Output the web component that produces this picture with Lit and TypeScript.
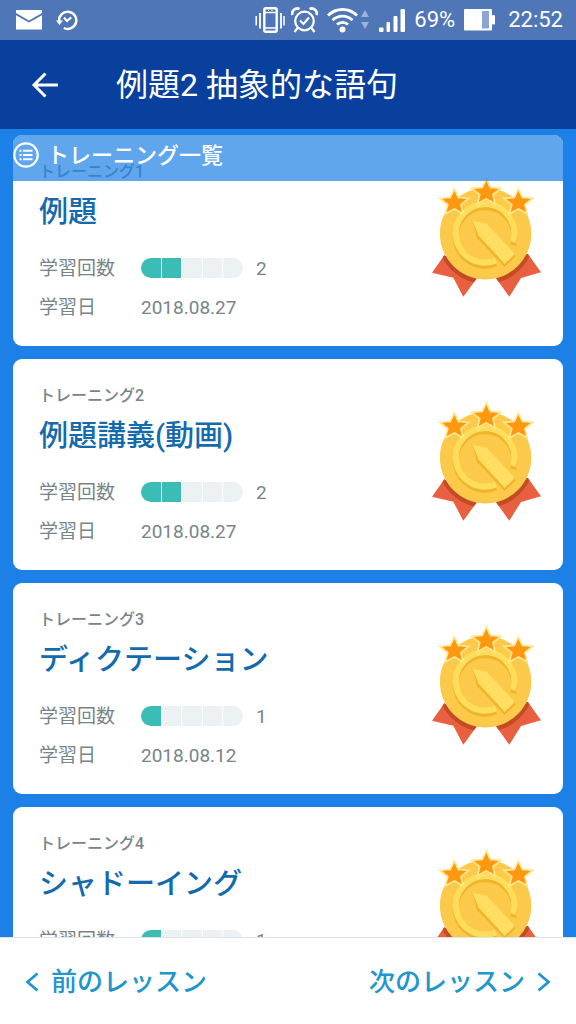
import { LitElement, html, css, svg } from "lit";
import { customElement, property } from "lit/decorators.js";

interface Training {
  no: number;
  title: string;
  count: number;
  date: string;
}

const TRAININGS: Training[] = [
  { no: 1, title: "例題", count: 2, date: "2018.08.27" },
  { no: 2, title: "例題講義(動画)", count: 2, date: "2018.08.27" },
  { no: 3, title: "ディクテーション", count: 1, date: "2018.08.12" },
  { no: 4, title: "シャドーイング", count: 1, date: "2018.08.12" },
];

const STAR = "0,-11.5 3.4,-4.2 12.2,-3.4 5.6,1.8 7.6,9.6 0,5.6 -7.6,9.6 -5.6,1.8 -12.2,-3.4 -3.4,-4.2";

const star = (x: number, y: number) => svg`
  <polygon points=${STAR} transform="translate(${x} ${y})" fill="#ff9711"
    stroke="#ffe78c" stroke-width="3.4" paint-order="stroke"/>`;

@customElement("status-bar")
class StatusBar extends LitElement {
  static styles = css`
    :host {
      display: flex;
      align-items: center;
      justify-content: space-between;
      height: 40px;
      padding: 0 13px 0 16px;
      background: #4f76b7;
      color: #fff;
      font: 400 22px/40px Roboto, sans-serif;
    }
    .side, .pair { display: flex; align-items: center; gap: 9px; }
    .left { gap: 14px; }
    .pair { gap: 6px; }
    svg { display: block; flex: none; }
  `;

  render() {
    return html`
      <div class="side left">
        <svg width="26" height="20" viewBox="0 0 26 20" fill="#fff">
          <path d="M0 0H26V3L13 10.400L0 3Z"/><path d="M0 5.200L13 12.500L26 5.200V19.500H0Z"/>
        </svg>
        <svg width="22" height="22" viewBox="0 0 22 22" fill="none" stroke="#fff" stroke-width="2.500">
          <path d="M3.200 12.500A8.600 8.600 0 1 1 7.800 19"/>
          <path d="M0 11.500H7L3.500 16Z" fill="#fff" stroke="none"/>
          <path d="M8 8.500L11 12L15.200 8.300" stroke-width="2.200"/>
        </svg>
      </div>
      <div class="side">
        <div class="pair">
          <svg width="30" height="28" viewBox="0 0 30 28" fill="none" stroke="#fff">
            <rect x="9.300" y="2.300" width="12.400" height="23.400" rx="1.500" stroke-width="2.400"/>
            <path d="M9 6.500H22M9 22H22" stroke-width="1.500"/>
            <path d="M13 4.500h1M16.500 4.500h1" stroke-width="1"/>
            <path d="M5 7V22.500M26 7V22.500" stroke-width="1.800"/>
            <path d="M1.200 10V19.500M29 10V19.500" stroke-width="1.500"/>
          </svg>
          <svg width="27" height="28" viewBox="0 0 27 28" fill="none" stroke="#fff" stroke-width="2.200">
            <circle cx="13.500" cy="15" r="9.300"/>
            <path d="M9 14.500L12.500 18L18 11.500"/>
            <path d="M6.500 22L3.500 26M20.500 22L23.500 26"/>
            <path d="M1.500 9A5 5 0 0 1 8.500 3M25.500 9A5 5 0 0 0 18.500 3" stroke-width="2.600"/>
          </svg>
        </div>
        <svg width="43" height="28" viewBox="0 0 43 28" fill="none" stroke="#fff" stroke-width="2.800">
          <path d="M1 9.500A20.500 20.500 0 0 1 30 9.500"/>
          <path d="M5.500 14.200A14.200 14.200 0 0 1 25.500 14.200"/>
          <path d="M10 18.600A8 8 0 0 1 21 18.600"/>
          <circle cx="15.500" cy="23.500" r="3" fill="#fff" stroke="none"/>
          <path d="M34 11L38 4L42 11ZM34 16L38 23L42 16Z" fill="#9db2db" stroke="none"/>
        </svg>
        <svg width="26" height="24" viewBox="0 0 26 24" fill="#fff">
          <rect x="0" y="19.500" width="4.500" height="4.500" rx="1"/>
          <rect x="7.500" y="14" width="3.500" height="10" rx="1"/>
          <rect x="14.500" y="8" width="4" height="16" rx="1"/>
          <rect x="21.500" y="1" width="4.500" height="23" rx="1"/>
        </svg>
        <span>69%</span>
        <svg width="35" height="22" viewBox="0 0 35 22">
          <rect x="0" y="0" width="28" height="21.500" rx="1" fill="#fff"/>
          <rect x="28" y="6" width="3" height="9.500" rx="1" fill="#fff"/>
          <rect x="18" y="2" width="7" height="17.500" fill="#8ea5d3"/>
        </svg>
        <span>22:52</span>
      </div>`;
  }
}

@customElement("gold-medal")
class GoldMedal extends LitElement {
  static styles = css`
    :host { display: block; }
    svg { display: block; }
  `;

  render() {
    return html`
      <svg width="113" height="122" viewBox="0 0 113 122" role="img" aria-label="金メダル">
        <defs>
          <clipPath id="ribbon">
            <path d="M14.300 79.300L2 96.700L23.300 101.700L33.300 120.700L50 98ZM97.700 77.700L111 96.300L91 102L79.300 120.700L63 98Z"/>
          </clipPath>
        </defs>
        <g clip-path="url(#ribbon)">
          <rect width="113" height="122" fill="#e8603f"/>
          <circle cx="55.600" cy="59.500" r="48.500" fill="#c54a26"/>
        </g>
        <circle cx="55.600" cy="57.700" r="45.700" fill="#fdc94b"/>
        <g fill="none" stroke-width="6">
          <path d="M66 84.500A29.200 29.200 0 1 1 83 66" stroke="#efb42a" transform="translate(0 3)"/>
          <path d="M66 84.500A29.200 29.200 0 1 1 83 66" stroke="#ffdd5c"/>
        </g>
        <path d="M42.300 44L47 62L74.700 91L85 81L85 78L57 47.700Z" fill="#f0b42c"/>
        <path d="M42.300 44L57 47.700L85 78L74.700 88L48.500 59.500Z" fill="#ffde62"/>
        ${star(24.3, 26.5)} ${star(88.3, 26.5)} ${star(56.3, 16.5)}
      </svg>`;
  }
}

@customElement("training-card")
class TrainingCard extends LitElement {
  @property({ attribute: false }) item!: Training;

  static styles = css`
    :host { display: block; flex: none; }
    .card {
      display: flex;
      justify-content: space-between;
      align-items: flex-start;
      padding: 0 20px 0 26px;
      border-radius: 9px;
      background: #fff;
      color: #77858b;
    }
    .text { padding: 27px 0; }
    .label { margin: 0; font-size: 16px; line-height: 20px; font-weight: 500; }
    .title { margin: 10px 0 26px; font-size: 29px; line-height: 40px; font-weight: 500; color: #136aad; }
    .stats {
      display: grid;
      grid-template-columns: 102px auto;
      row-gap: 17px;
      margin: 0;
      font-size: 19px;
      line-height: 22px;
    }
    dd { display: flex; gap: 13px; margin: 0; }
    .meter {
      display: grid;
      grid-template-columns: repeat(5, 1fr);
      gap: 1px;
      width: 102px;
      height: 20px;
      border-radius: 10px;
      overflow: hidden;
    }
    .step { background: #ecf1f4; }
    .done { background: #3bbdb6; }
    .medal { margin-top: 41px; }
  `;

  render() {
    const { no, title, count, date } = this.item;
    return html`
      <article class="card">
        <div class="text">
          <p class="label">トレーニング${no}</p>
          <h2 class="title">${title}</h2>
          <dl class="stats">
            <dt>学習回数</dt>
            <dd>
              <span class="meter">
                ${[0, 1, 2, 3, 4].map((i) => html`<span class="step ${i < count ? "done" : ""}"></span>`)}
              </span>
              <span>${count}</span>
            </dd>
            <dt>学習日</dt>
            <dd>${date}</dd>
          </dl>
        </div>
        <gold-medal class="medal"></gold-medal>
      </article>`;
  }
}

@customElement("app-root")
class AppRoot extends LitElement {
  static styles = css`
    :host {
      display: flex;
      flex-direction: column;
      height: 100vh;
      background: #1c80e6;
      font-family: Roboto, "Noto Sans CJK JP", sans-serif;
    }
    .bar {
      display: flex;
      align-items: center;
      gap: 56px;
      flex: none;
      box-sizing: border-box;
      height: 89px;
      padding: 1px 30px 0;
      background: #0a409d;
      color: #fff;
    }
    .back { display: block; padding: 0; border: 0; background: none; color: inherit; }
    .back svg, .overlay svg, .nav svg { display: block; }
    h1 { margin: 0; font-size: 32px; line-height: 40px; font-weight: 400; }
    main { position: relative; flex: 1; min-height: 0; }
    .list {
      display: flex;
      flex-direction: column;
      gap: 13px;
      box-sizing: border-box;
      height: 100%;
      padding: 6px 13px 13px;
      overflow-y: auto;
      scrollbar-width: none;
    }
    .overlay {
      position: absolute;
      top: 6px;
      left: 13px;
      right: 13px;
      display: flex;
      align-items: flex-start;
      gap: 8px;
      box-sizing: border-box;
      height: 46px;
      padding-top: 7px;
      border-radius: 9px 9px 0 0;
      background: rgba(28, 128, 230, 0.7);
      color: #fff;
      font-size: 22px;
      line-height: 28px;
      font-weight: 500;
    }
    .footer {
      display: flex;
      justify-content: space-between;
      align-items: center;
      flex: none;
      box-sizing: border-box;
      height: 87px;
      padding: 1px 25px 0;
      border-top: 1px solid #dfe3e6;
      background: #fff;
    }
    .nav {
      display: flex;
      align-items: center;
      gap: 12px;
      color: #2196cb;
      font-size: 26px;
      line-height: 40px;
      font-weight: 500;
      text-decoration: none;
    }
  `;

  render() {
    return html`
      <status-bar></status-bar>
      <header class="bar">
        <button class="back" aria-label="戻る">
          <svg width="30" height="30" viewBox="0 0 30 30" fill="none" stroke="currentColor" stroke-width="3">
            <path d="M15.500 3.500L4 15L15.500 26.500M4 15H28"/>
          </svg>
        </button>
        <h1>例題2 抽象的な語句</h1>
      </header>
      <main>
        <div class="list">
          ${TRAININGS.map((t) => html`<training-card .item=${t}></training-card>`)}
        </div>
        <div class="overlay">
          <svg width="26" height="26" viewBox="0 0 26 26" fill="none" stroke="#fff">
            <circle cx="13" cy="13" r="11.700" stroke-width="2.200"/>
            <path d="M10 8.800H19.500M10 13H19.500M10 17.200H19.500" stroke-width="2"/>
            <path d="M6.500 8.800H8.500M6.500 13H8.500M6.500 17.200H8.500" stroke-width="2"/>
          </svg>
          <span>トレーニング一覧</span>
        </div>
      </main>
      <nav class="footer">
        <a class="nav" href="#prev">
          <svg width="14" height="20" viewBox="0 0 14 20" fill="none" stroke="currentColor" stroke-width="2.800">
            <path d="M12.500 1.500L2.500 10L12.500 18.500"/>
          </svg>
          前のレッスン
        </a>
        <a class="nav" href="#next">
          次のレッスン
          <svg width="14" height="20" viewBox="0 0 14 20" fill="none" stroke="currentColor" stroke-width="2.800">
            <path d="M1.500 1.500L11.500 10L1.500 18.500"/>
          </svg>
        </a>
      </nav>`;
  }
}
